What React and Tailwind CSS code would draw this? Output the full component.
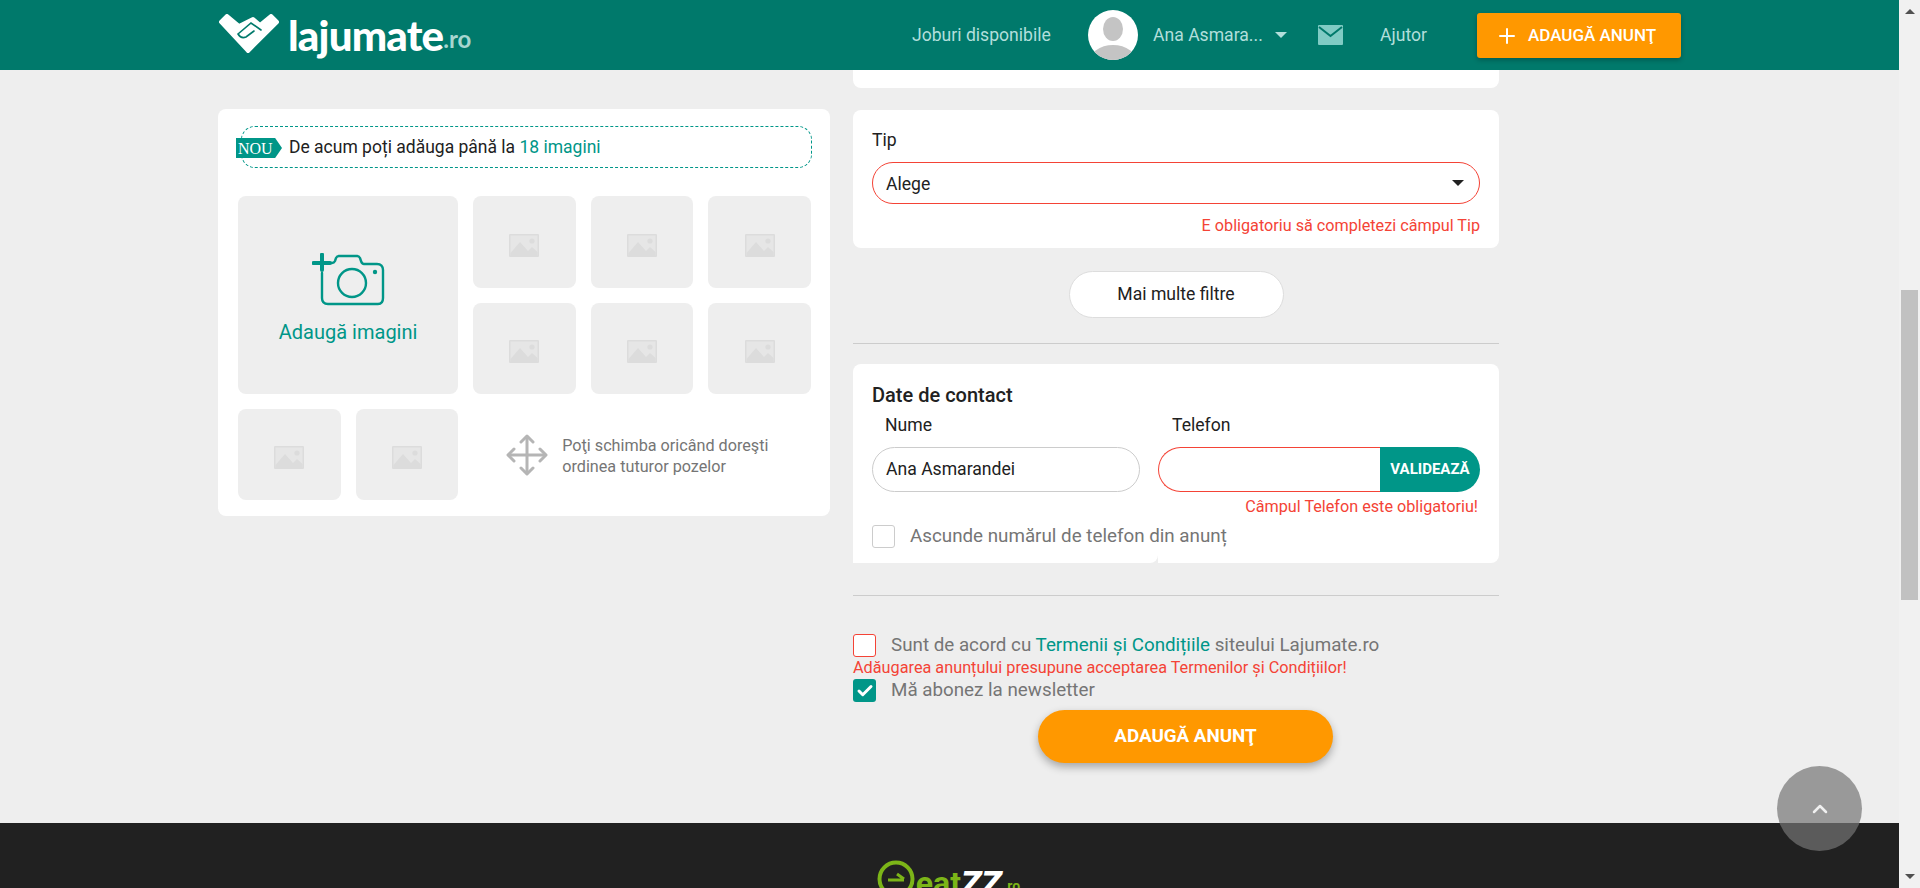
import { Plus, ChevronUp, Check } from 'lucide-react';

const roboto = "font-['Roboto',sans-serif]";

function Logo() {
  return (
    <div className="flex items-start w-[252px] shrink-0">
      <svg width="63" height="40" viewBox="0 0 63 40" className="mt-[14px] shrink-0">
        <path d="M3 8 L9 2 L21 12 L35 5 L42 11 L53 2 L59 8 L30 37 Z" fill="#fff" stroke="#fff" strokeWidth="4" strokeLinejoin="round" />
        <path d="M20 20 L33 9 L43 16 M20 20 Q23 25 28 23 L36 17" fill="none" stroke="#00796b" strokeWidth="1.6" strokeLinecap="round" />
      </svg>
      <span className="ml-[7px] mt-[12px] text-[42px] leading-[46px] font-black tracking-[-0.8px] text-white font-['Lato',sans-serif]">lajumate</span>
      <span className="mt-[23px] text-[24px] leading-[32px] font-bold text-[#a7d6d0] font-['Lato',sans-serif]">.ro</span>
    </div>
  );
}

function Header() {
  return (
    <header className="h-[70px] bg-[#00796b] shrink-0">
      <div className="w-[1463px] mx-auto h-full flex items-start text-[17.6px] text-[#b2dfdb]">
        <Logo />
        <span className="ml-[442px] mt-[24px] leading-[22px] w-[138px] whitespace-nowrap">Joburi disponibile</span>
        <div className="ml-[38px] mt-[10px] w-[50px] h-[50px] rounded-full bg-white overflow-hidden">
          <svg width="50" height="50" viewBox="0 0 50 50">
            <ellipse cx="25" cy="19" rx="10" ry="12" fill="#c4c4c4" />
            <ellipse cx="25" cy="53" rx="24" ry="18" fill="#c4c4c4" />
          </svg>
        </div>
        <span className="ml-[15px] mt-[24px] leading-[22px] w-[107px] whitespace-nowrap">Ana Asmara...</span>
        <div className="ml-[15px] mt-[32px] w-0 h-0 border-x-[6px] border-x-transparent border-t-[6px] border-t-[#b2dfdb]" />
        <svg width="25" height="20" viewBox="0 0 25 20" className="ml-[31px] mt-[25px]">
          <rect width="25" height="20" rx="1" fill="#80cbc4" />
          <path d="M1 2 L12.5 11 L24 2" fill="none" stroke="#00796b" strokeWidth="2" />
        </svg>
        <span className="ml-[37px] mt-[24px] leading-[22px] w-[47px]">Ajutor</span>
        <div className="ml-[50px] mt-[13px] w-[204px] h-[45px] bg-[#ff9800] rounded-[3px] shadow-[0_2px_5px_rgba(0,0,0,0.26)] flex items-center text-white">
          <Plus size={24} strokeWidth={2} className="ml-[18px]" />
          <span className="ml-[9px] text-[17px] font-medium whitespace-nowrap">ADAUGĂ ANUNŢ</span>
        </div>
      </div>
    </header>
  );
}

function ImageIcon() {
  return (
    <svg width="30" height="23" viewBox="0 0 30 23">
      <rect x="0" y="0" width="30" height="23" rx="1" fill="#dcdcdc" />
      <rect x="1.5" y="1.5" width="27" height="20" fill="#e6e6e6" />
      <circle cx="23" cy="7" r="2.6" fill="#dcdcdc" />
      <path d="M1.5 19 L11 8 L19 17 L23 13 L28.5 18 L28.5 23 L1.5 23 Z" fill="#dcdcdc" />
    </svg>
  );
}

function Tile() {
  return (
    <div className="bg-[#eeeeee] rounded-lg flex items-center justify-center pt-[6px]">
      <ImageIcon />
    </div>
  );
}

function CameraIcon() {
  return (
    <svg width="73" height="53" viewBox="0 0 73 53">
      <path d="M10 20 V45 Q10 51 16 51 H66 Q71 51 71 45 V17 Q71 11 65 11 H52 Q50 11 49 8 L48 5 Q47 3 45 3 H27 Q25 3 24 5 L23 8 Q22 10 20 10 H18" fill="none" stroke="#009688" strokeWidth="2.4" strokeLinecap="round" />
      <circle cx="40" cy="30" r="14" fill="none" stroke="#009688" strokeWidth="2.4" />
      <circle cx="63" cy="19" r="2.2" fill="#009688" />
      <path d="M10 1.5 V17 M1.5 10 H18" fill="none" stroke="#009688" strokeWidth="4" strokeLinecap="round" />
    </svg>
  );
}

function MoveIcon() {
  return (
    <svg width="42" height="42" viewBox="0 0 42 42" fill="none" stroke="#b5b5b5" strokeWidth="3" strokeLinecap="round" strokeLinejoin="round" className="shrink-0">
      <path d="M21 3 V39 M3 21 H39" />
      <path d="M15 8 L21 2 L27 8 M15 34 L21 40 L27 34 M8 15 L2 21 L8 27 M34 15 L40 21 L34 27" />
    </svg>
  );
}

function ImagesCard() {
  return (
    <section className="w-[612px] mt-[39px] h-[407px] bg-white rounded-lg pt-[17px]">
      <div className="relative ml-[23px] w-[571px] h-[42px] border border-dashed border-[#009688] rounded-[14px] flex items-center pl-[47px] text-[17.5px] text-[#212121]">
        <span className="absolute left-[-6px] top-[11px] h-[20px] w-[46px] bg-[#009688] text-white text-[16px] leading-[22px] pl-[2px] font-['Liberation_Serif',serif] [clip-path:polygon(0_0,85%_0,100%_50%,85%_100%,0_100%)]">NOU</span>
        <span className="mt-[1px]">De acum poți adăuga până la <span className="text-[#009688]">18 imagini</span></span>
      </div>
      <div className="mt-[28px] ml-[20px] w-[573px] grid grid-cols-5 gap-[15px] grid-rows-[92px_91px_91px]">
        <div className="col-span-2 row-span-2 bg-[#eeeeee] rounded-lg flex flex-col items-center pt-[57px]">
          <CameraIcon />
          <span className="mt-[12px] text-[20px] leading-[28px] text-[#009688]">Adaugă imagini</span>
        </div>
        <Tile /><Tile /><Tile /><Tile /><Tile /><Tile /><Tile /><Tile />
        <div className="col-span-3 flex items-center pl-[33px] text-[16.2px] leading-[21px] text-[#757575]">
          <MoveIcon />
          <p className="ml-[14px] mt-[2px]">Poţi schimba oricând doreşti<br />ordinea tuturor pozelor</p>
        </div>
      </div>
    </section>
  );
}

function TipCard() {
  return (
    <section className="mt-[22px] h-[138px] bg-white rounded-lg px-[19px] pt-[19px]">
      <div className="text-[17.6px] leading-[22px] text-[#212121]">Tip</div>
      <div className="mt-[11px] h-[42px] border border-[#f44336] rounded-[21px] flex items-center justify-between pl-[13px] pr-[15px] text-[17.6px] text-[#212121]">
        <span className="mt-[2px]">Alege</span>
        <div className="w-0 h-0 border-x-[6px] border-x-transparent border-t-[6px] border-t-[#212121]" />
      </div>
      <div className="mt-[12px] text-right text-[16.2px] leading-[20px] text-[#f44336]">E obligatoriu să completezi câmpul Tip</div>
    </section>
  );
}

function ContactCard() {
  return (
    <section className="mt-[20px] h-[199px] text-[17.6px]">
      <div className="h-[44px] bg-white rounded-t-lg pl-[19px] pt-[19px] text-[20px] leading-[24px] font-medium text-[#212121]">Date de contact</div>
      <div className="flex h-[155px]">
        {/* left half sits above the right one, the checkbox label runs past it */}
        <div className="relative z-10 w-[305px] bg-white rounded-br-lg pl-[19px]">
          <div className="pl-[13px] pt-[6px] leading-[22px] text-[#212121]">Nume</div>
          <div className="mt-[11px] w-[268px] h-[45px] border border-[#cccccc] rounded-[23px] flex items-center pl-[13px] text-[#212121]">Ana Asmarandei</div>
          <div className="mt-[33px] flex items-center whitespace-nowrap">
            <div className="w-[23px] h-[23px] shrink-0 border border-[#cccccc] rounded-[3px] bg-white" />
            <span className="ml-[15px] text-[18.8px] leading-[23px] -mt-[1px] text-[#757575]">Ascunde numărul de telefon din anunț</span>
          </div>
        </div>
        <div className="flex-1 bg-white rounded-br-lg">
          <div className="pl-[14px] pt-[6px] leading-[22px] text-[#212121]">Telefon</div>
          <div className="mt-[11px] w-[322px] h-[45px] flex">
            <div className="flex-1 border border-r-0 border-[#f44336] rounded-l-[23px]" />
            <div className="w-[100px] bg-[#009688] rounded-r-[23px] flex items-center justify-center text-white text-[15px] font-bold">VALIDEAZĂ</div>
          </div>
          <div className="w-[320px] mt-[5px] text-right text-[16.2px] leading-[20px] text-[#f44336]">Câmpul Telefon este obligatoriu!</div>
        </div>
      </div>
    </section>
  );
}

function Terms() {
  return (
    <div className="mt-[38px] text-[18.8px] text-[#757575]">
      <div className="flex items-center h-[23px]">
        <div className="w-[23px] h-[23px] shrink-0 bg-white border border-[#f44336] rounded-[3px]" />
        <span className="ml-[15px] whitespace-nowrap">Sunt de acord cu <span className="text-[#009688]">Termenii și Condițiile</span> siteului Lajumate.ro</span>
      </div>
      <div className="h-[22px] leading-[21px] text-[16.25px] text-[#f44336] whitespace-nowrap">Adăugarea anunțului presupune acceptarea Termenilor și Condițiilor!</div>
      <div className="flex items-center h-[23px]">
        <div className="w-[23px] h-[23px] shrink-0 bg-[#009688] rounded-[3px] flex items-center justify-center">
          <Check size={18} strokeWidth={4} className="text-white" />
        </div>
        <span className="ml-[15px]">Mă abonez la newsletter</span>
      </div>
      <button className="block mt-[8px] ml-[185px] w-[295px] h-[53px] rounded-[27px] bg-[#ff9800] text-white text-[18.8px] font-bold shadow-[0_4px_8px_rgba(0,0,0,0.3)]">ADAUGĂ ANUNŢ</button>
    </div>
  );
}

function Footer() {
  return (
    <footer className="h-[65px] bg-[#212121] shrink-0 overflow-hidden flex justify-center">
      <div className="flex items-start mt-[37px] ml-[-2px]">
        <svg width="38" height="38" viewBox="0 0 38 38" fill="none" stroke="#7cb518" strokeWidth="4">
          <circle cx="19" cy="19" r="16.5" />
          <path d="M11 20 H27 M20 14 L27 19" strokeWidth="3" />
        </svg>
        <span className="ml-[1px] mt-[5px] text-[32px] leading-[36px] font-bold text-[#7cb518] font-['Roboto',sans-serif]">eat</span>
        <span className="mt-[5px] text-[34px] leading-[36px] font-black italic text-white font-['Roboto',sans-serif]">ZZ</span>
        <span className="ml-[2px] mt-[17px] text-[14px] leading-[18px] font-bold text-[#7cb518] font-['Roboto',sans-serif]">.ro</span>
      </div>
    </footer>
  );
}

function Scrollbar() {
  return (
    <div className="w-[21px] bg-[#f1f1f1] flex flex-col items-center relative shrink-0">
      <div className="mt-[9px] w-0 h-0 border-x-[5px] border-x-transparent border-b-[5px] border-b-[#505050]" />
      <div className="mt-[276px] w-[17px] h-[310px] bg-[#c1c1c1]" />
      <div className="mt-[274px] w-0 h-0 border-x-[5px] border-x-transparent border-t-[5px] border-t-[#505050]" />
    </div>
  );
}

export default function App() {
  return (
    <div className={`relative w-full h-[888px] overflow-hidden flex bg-[#eeeeee] ${roboto}`}>
      <div className="flex-1 flex flex-col min-w-0">
        <Header />
        <main className="flex-1 min-h-0">
          <div className="w-[1463px] mx-auto flex gap-[23px] items-start">
            <ImagesCard />
            <div className="w-[646px]">
              <div className="h-[18px] bg-white rounded-b-lg" />
              <TipCard />
              <button className="block mt-[23px] mx-auto w-[215px] h-[47px] bg-white border border-[#dddddd] rounded-[24px] text-[17.6px] text-[#212121]">Mai multe filtre</button>
              <div className="mt-[25px] h-px bg-[#cccccc]" />
              <ContactCard />
              <div className="mt-[32px] h-px bg-[#cccccc]" />
              <Terms />
            </div>
          </div>
        </main>
        <Footer />
      </div>
      <Scrollbar />
      <div className="absolute left-[1777px] top-[766px] w-[85px] h-[85px] rounded-full bg-[#757575]/70 flex items-center justify-center text-white/85">
        <ChevronUp size={24} strokeWidth={2.5} />
      </div>
    </div>
  );
}
